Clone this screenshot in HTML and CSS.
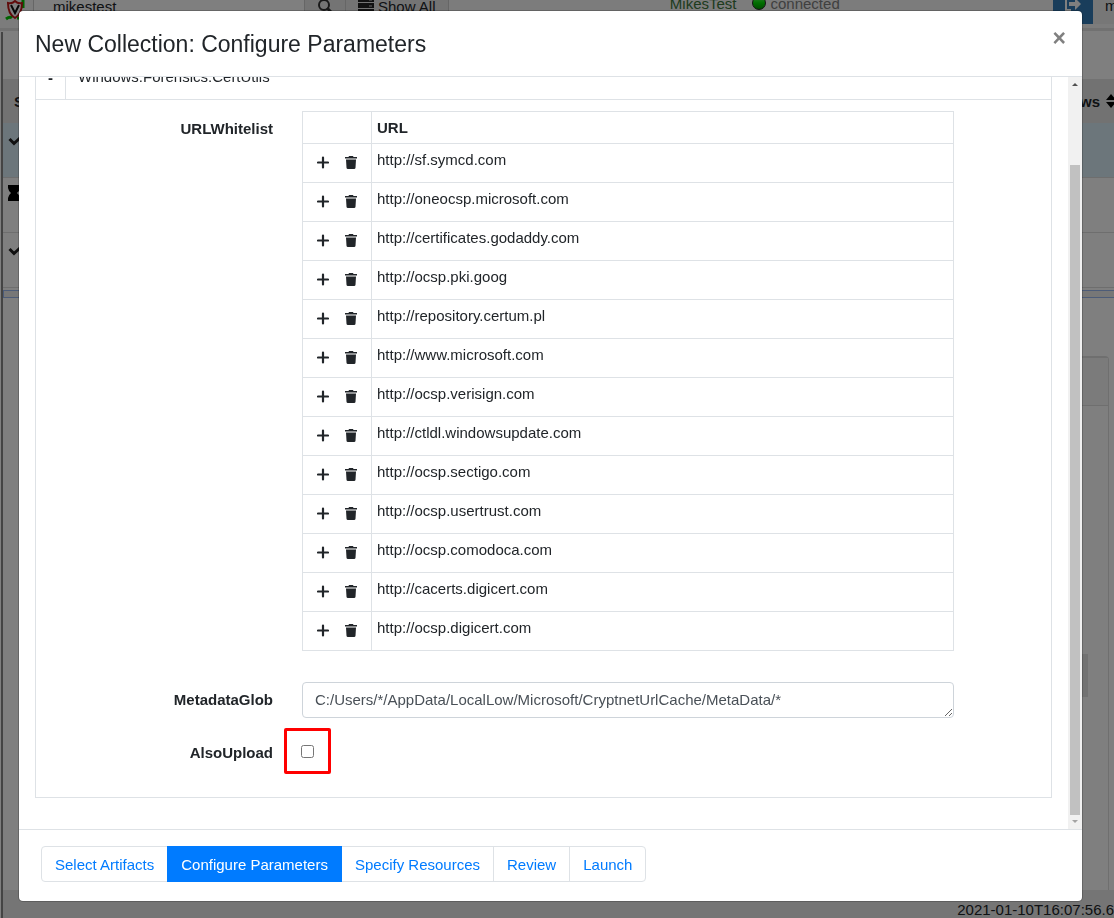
FILE: index.html
```html
<!DOCTYPE html>
<html lang="en">
<head>
    <meta charset="UTF-8">
    <meta name="viewport" content="width=device-width, initial-scale=1.0">
    <title>New Collection: Configure Parameters</title>
    <link rel="stylesheet" href="styles.css">
</head>
<body>
    <!-- Shared icons -->
    <svg class="icon-defs" aria-hidden="true">
        <symbol id="plus" viewBox="0 0 12 13"><path d="M6 1.500v10M1 6.500h10" fill="none" stroke="#212529" stroke-width="2.200" stroke-linecap="round"/></symbol>
        <symbol id="trash" viewBox="0 0 12 13"><path d="M0 1h3.500l.5-1h4l.5 1H12v1.500H0zM1 3.500h10l-.5 8.200q-.1 1.300-1.400 1.300H2.900q-1.300 0-1.400-1.300z"/></symbol>
        <symbol id="check" viewBox="0 0 14 10"><path d="M1.500 3l4.500 4.500L12.500 1.500" fill="none" stroke="#222" stroke-width="3"/></symbol>
        <symbol id="hourglass" viewBox="0 0 12 16"><path d="M0 0h12v3q-.5 3-3 5 2.500 2 3 5v3H0v-3q.5-3 3-5-2.500-2-3-5z"/></symbol>
    </svg>

    <!-- Application behind the dialog -->
    <div class="app">
        <header class="navbar">
            <svg class="logo" viewBox="0 0 26 28" aria-hidden="true">
                <path d="M5 3Q13-3 22 2M6 23q4-3 6-1M23 2v10M17 22h3" fill="none" stroke="#00c800" stroke-width="3"/>
                <path d="M15 5q3 3 7 2 0 11-7 15-7-4-7-15 4 1 7-2z" fill="#fff" stroke="#c01818" stroke-width="2"/>
                <path d="M11 9l4 8 4-8" fill="none" stroke="#111" stroke-width="2"/>
            </svg>
            <input class="search" type="text" value="mikestest" aria-label="Search clients">
            <button class="nav-button" aria-label="Search">
                <svg width="16" height="16" viewBox="0 0 16 16"><circle cx="7" cy="7" r="5" fill="none" stroke="#333" stroke-width="2"/><path d="M10 10l5 5" stroke="#333" stroke-width="3"/></svg>
            </button>
            <button class="nav-button">
                <svg width="16" height="16" viewBox="0 0 16 16" fill="#222"><path d="M0 0h16v4H0zM0 5h16v5H0zM0 11h16v5H0z"/><path d="M11 2h3M11 8h3M11 14h3" stroke="#ccc"/></svg>
                Show All
            </button>
            <div class="client"><a href="#client">MikesTest</a><span class="online"></span>connected</div>
            <button class="logout" aria-label="Log out">
                <svg width="16" height="16" viewBox="0 0 16 16"><path d="M6 2H1v12h5" fill="none" stroke="#fff" stroke-width="2"/><path d="M4 6h6V2l6 6-6 6v-4H4z" fill="#fff"/></svg>
            </button>
            <div class="user">m</div>
        </header>
        <main class="flows">
            <div class="toolbar"></div>
            <div class="flow-head"><span>S</span><span class="rows-title">Rows <svg width="10" height="14" viewBox="0 0 10 14"><path d="M0 6l5-6 5 6zM0 8l5 6 5-6z"/></svg></span></div>
            <div class="flow selected"><svg width="14" height="10"><use href="#check"/></svg></div>
            <div class="flow"><svg width="12" height="16"><use href="#hourglass"/></svg></div>
            <div class="flow"><svg width="14" height="10"><use href="#check"/></svg></div>
            <div class="splitter"></div>
            <div class="details">
                <div class="card">
                    <div class="card-header"></div>
                    <div class="card-body"><div class="block"></div></div>
                </div>
            </div>
            <footer class="status">2021-01-10T16:07:56.6</footer>
        </main>
    </div>

    <!-- Dialog -->
    <div class="backdrop">
        <div class="modal" role="dialog" aria-labelledby="modal-title">
            <div class="modal-header">
                <h1 class="modal-title" id="modal-title">New Collection: Configure Parameters</h1>
                <button class="close" aria-label="Close">×</button>
            </div>

            <div class="modal-main">
                <div class="modal-body">
                    <form class="artifact">
                        <div class="artifact-head">
                            <button class="toggle" type="button">-</button>
                            <span class="artifact-name">Windows.Forensics.CertUtils</span>
                        </div>
                        <div class="parameters">
                            <div class="form-row list-row">
                                <div class="label">URLWhitelist</div>
                                <table class="url-table">
                                    <thead>
                                        <tr><th class="actions"></th><th>URL</th></tr>
                                    </thead>
                                    <tbody>
                                        <tr><td><button type="button" aria-label="Add"><svg><use href="#plus"/></svg></button><button type="button" aria-label="Delete"><svg><use href="#trash"/></svg></button></td><td>http://sf.symcd.com</td></tr>
                                        <tr><td><button type="button" aria-label="Add"><svg><use href="#plus"/></svg></button><button type="button" aria-label="Delete"><svg><use href="#trash"/></svg></button></td><td>http://oneocsp.microsoft.com</td></tr>
                                        <tr><td><button type="button" aria-label="Add"><svg><use href="#plus"/></svg></button><button type="button" aria-label="Delete"><svg><use href="#trash"/></svg></button></td><td>http://certificates.godaddy.com</td></tr>
                                        <tr><td><button type="button" aria-label="Add"><svg><use href="#plus"/></svg></button><button type="button" aria-label="Delete"><svg><use href="#trash"/></svg></button></td><td>http://ocsp.pki.goog</td></tr>
                                        <tr><td><button type="button" aria-label="Add"><svg><use href="#plus"/></svg></button><button type="button" aria-label="Delete"><svg><use href="#trash"/></svg></button></td><td>http://repository.certum.pl</td></tr>
                                        <tr><td><button type="button" aria-label="Add"><svg><use href="#plus"/></svg></button><button type="button" aria-label="Delete"><svg><use href="#trash"/></svg></button></td><td>http://www.microsoft.com</td></tr>
                                        <tr><td><button type="button" aria-label="Add"><svg><use href="#plus"/></svg></button><button type="button" aria-label="Delete"><svg><use href="#trash"/></svg></button></td><td>http://ocsp.verisign.com</td></tr>
                                        <tr><td><button type="button" aria-label="Add"><svg><use href="#plus"/></svg></button><button type="button" aria-label="Delete"><svg><use href="#trash"/></svg></button></td><td>http://ctldl.windowsupdate.com</td></tr>
                                        <tr><td><button type="button" aria-label="Add"><svg><use href="#plus"/></svg></button><button type="button" aria-label="Delete"><svg><use href="#trash"/></svg></button></td><td>http://ocsp.sectigo.com</td></tr>
                                        <tr><td><button type="button" aria-label="Add"><svg><use href="#plus"/></svg></button><button type="button" aria-label="Delete"><svg><use href="#trash"/></svg></button></td><td>http://ocsp.usertrust.com</td></tr>
                                        <tr><td><button type="button" aria-label="Add"><svg><use href="#plus"/></svg></button><button type="button" aria-label="Delete"><svg><use href="#trash"/></svg></button></td><td>http://ocsp.comodoca.com</td></tr>
                                        <tr><td><button type="button" aria-label="Add"><svg><use href="#plus"/></svg></button><button type="button" aria-label="Delete"><svg><use href="#trash"/></svg></button></td><td>http://cacerts.digicert.com</td></tr>
                                        <tr><td><button type="button" aria-label="Add"><svg><use href="#plus"/></svg></button><button type="button" aria-label="Delete"><svg><use href="#trash"/></svg></button></td><td>http://ocsp.digicert.com</td></tr>
                                    </tbody>
                                </table>
                            </div>
                            <div class="form-row">
                                <label class="label" for="metadata-glob">MetadataGlob</label>
                                <textarea id="metadata-glob" rows="1">C:/Users/*/AppData/LocalLow/Microsoft/CryptnetUrlCache/MetaData/*</textarea>
                            </div>
                            <div class="form-row check-row">
                                <label class="label" for="also-upload">AlsoUpload</label>
                                <div class="check"><input type="checkbox" id="also-upload"></div>
                            </div>
                        </div>
                    </form>
                </div>
                <div class="scrollbar" aria-hidden="true">
                    <svg class="arrow" viewBox="0 0 14 14"><path d="M4 9l3-3 3 3z" fill="#505050"/></svg>
                    <div class="thumb"></div>
                    <svg class="arrow" viewBox="0 0 14 14"><path d="M4 5l3 3 3-3z" fill="#a3a3a3"/></svg>
                </div>
            </div>

            <div class="modal-footer">
                <nav class="steps">
                    <button>Select Artifacts</button>
                    <button class="active">Configure Parameters</button>
                    <button>Specify Resources</button>
                    <button>Review</button>
                    <button>Launch</button>
                </nav>
            </div>
        </div>
    </div>
</body>
</html>
```
FILE: styles.css
```css
* {
    box-sizing: border-box;
}

body {
    margin: 0;
    height: 100vh;
    overflow: hidden;
    font-family: "Liberation Sans", Arial, sans-serif;
    font-size: 15px;
    line-height: 23px;
    color: #212529;
    background: #fff;
}

button,
input,
textarea {
    font: inherit;
    color: inherit;
}

button {
    border: 0;
    background: none;
    padding: 0;
}

.icon-defs {
    display: none;
}

/* Application behind the dialog */
.app {
    display: flex;
    flex-direction: column;
    height: 100vh;
}

.navbar {
    display: flex;
    align-items: flex-end;
    height: 31px;
    flex-shrink: 0;
    overflow: hidden;
    padding-bottom: 4px;
    background: #f8f8f8;
    border-bottom: 3px solid #e2e2e2;
}

.logo {
    width: 26px;
    height: 28px;
    margin-right: 7px;
}

.search {
    width: 272px;
    height: 36px;
    padding: 0 19px;
    border: 1px solid #ccc;
    background: #fff;
}

.nav-button {
    display: flex;
    align-items: center;
    gap: 4px;
    height: 36px;
    padding: 0 12px;
    border: 1px solid #ccc;
    border-left: 0;
    background: #e8e8e8;
}

.client {
    display: flex;
    align-items: center;
    height: 42px;
    margin: 0 auto;
    padding-left: 8px;
    color: #808080;
}

.client a {
    color: #3c763d;
    text-decoration: none;
}

.online {
    width: 14px;
    height: 14px;
    margin: 0 5px 0 15px;
    border: 1px solid #222;
    border-radius: 50%;
    background: linear-gradient(#5f5, #0d0 50%, #090);
}

.logout {
    width: 40px;
    height: 36px;
    background: #337ab7;
}

.user {
    width: 21px;
    height: 36px;
    padding: 6px 0 0 12px;
    background: #eee;
}

.flows {
    display: flex;
    flex-direction: column;
    flex: 1;
    min-height: 0;
    margin: 1px 0 0 1px;
    border-left: 2px solid #888;
}

.toolbar {
    height: 47px;
}

.flow-head {
    display: flex;
    justify-content: space-between;
    align-items: center;
    height: 44px;
    padding-left: 11px;
    background: #e5e5e5;
    font-weight: bold;
}

.rows-title {
    display: flex;
    align-items: center;
    justify-content: space-between;
    width: 56px;
    margin-right: -2px;
}

.flow {
    height: 55px;
    padding: 6px 5px;
    border-bottom: 1px solid #ddd;
}

.flow.selected {
    background: #d9edf7;
}

.splitter {
    height: 8px;
    margin-top: 2px;
    border: 1px solid #9bb8f0;
    border-right: 0;
    background: #eee;
}

.details {
    flex: 1;
    padding: 58px 5px 0 16px;
}

.card {
    display: flex;
    flex-direction: column;
    height: 100%;
    border: 1px solid #dfdfdf;
    border-top-width: 2px;
    border-bottom: 0;
    border-radius: 4px 4px 0 0;
}

.card-header {
    height: 48px;
    background: #f7f7f7;
    border-bottom: 1px solid #dfdfdf;
}

.card-body {
    padding: 248px 20px 0;
}

.block {
    height: 43px;
    background: #e5e5e5;
}

.status {
    height: 28px;
    padding-top: 8px;
    overflow: hidden;
    background: #eaeaea;
    text-align: right;
}

/* Dialog */
.backdrop {
    position: fixed;
    inset: 0;
    display: flex;
    padding: 10px 31px 16px 18px;
    background: rgba(0, 0, 0, 0.5);
}

.modal {
    display: flex;
    flex-direction: column;
    flex: 1;
    min-width: 0;
    background: #fff;
    background-clip: padding-box;
    border: 1px solid rgba(0, 0, 0, 0.2);
    border-radius: 5px;
}

.modal-header {
    display: flex;
    justify-content: space-between;
    align-items: flex-start;
    padding: 16px 16px 15px;
    border-bottom: 1px solid #dee2e6;
}

.modal-title {
    margin: 0;
    font-size: 23px;
    font-weight: normal;
    line-height: 34px;
}

.close {
    font-size: 23px;
    font-weight: bold;
    color: #808080;
}

.modal-main {
    display: flex;
    flex: 1;
    min-height: 0;
}

/* column-reverse opens the form scrolled to its end */
.modal-body {
    display: flex;
    flex-direction: column-reverse;
    flex: 1;
    padding: 64px 16px 31px;
    overflow-y: auto;
    scrollbar-width: none;
}

.scrollbar {
    display: flex;
    flex-direction: column;
    width: 14px;
    background: #f1f1f1;
}

.arrow {
    width: 14px;
    height: 14px;
}

.thumb {
    flex: 1;
    margin: 74px 2px 0;
    background: #c1c1c1;
}

.artifact {
    flex-shrink: 0;
    border: 1px solid #dee2e6;
}

.artifact-head {
    display: flex;
    height: 44px;
    border-bottom: 1px solid #dee2e6;
}

.toggle {
    width: 30px;
    border-right: 1px solid #dee2e6;
    font-weight: bold;
}

.artifact-name {
    padding: 9px 12px;
}

.parameters {
    display: grid;
    gap: 10px;
    padding: 11px 97px 23px 0;
}

.form-row {
    display: grid;
    grid-template-columns: 237px 1fr;
    column-gap: 29px;
}

.list-row {
    margin-bottom: 21px;
}

.check-row {
    align-items: center;
}

.label {
    padding-top: 6px;
    font-weight: bold;
    text-align: right;
}

.check-row .label {
    padding-top: 3px;
}

.url-table {
    width: 100%;
    border-collapse: collapse;
}

.url-table th,
.url-table td {
    border: 1px solid #dee2e6;
    padding: 4px 5px;
    height: 39px;
    text-align: left;
    vertical-align: top;
}

.url-table td:first-child {
    padding: 4px 6px;
}

.url-table th {
    height: 32px;
}

.url-table .actions {
    width: 69px;
}

.url-table button {
    width: 28px;
    height: 28px;
    vertical-align: top;
}

.url-table button svg {
    display: block;
    width: 12px;
    height: 13px;
    margin: 0 auto;
    fill: #212529;
}

textarea {
    display: block;
    width: 100%;
    height: 36px;
    padding: 5px 12px;
    overflow: hidden;
    border: 1px solid #ced4da;
    border-radius: 4px;
    color: #495057;
    resize: vertical;
}

.check {
    display: flex;
    align-items: center;
    justify-content: center;
    width: 47px;
    height: 46px;
    margin-left: -18px;
    border: 3px solid #f00;
    border-radius: 2px;
}

.check input {
    width: 13px;
    height: 13px;
    margin: 0;
}

.modal-footer {
    padding: 16px 22px 19px;
    border-top: 1px solid #dee2e6;
}

.steps {
    display: flex;
}

.steps button {
    height: 36px;
    padding: 0 13px;
    border: 1px solid #dee2e6;
    margin-left: -1px;
    color: #007bff;
}

.steps button:first-child {
    margin-left: 0;
    border-radius: 4px 0 0 4px;
}

.steps button:last-child {
    border-radius: 0 4px 4px 0;
}

.steps .active {
    background: #007bff;
    border-color: #007bff;
    color: #fff;
    z-index: 1;
}
```
